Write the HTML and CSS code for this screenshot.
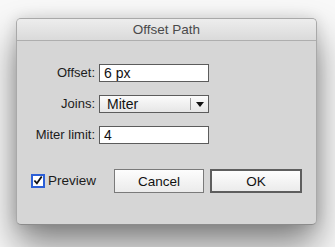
FILE: index.html
```html
<!DOCTYPE html>
<html lang="en">
<head>
    <meta charset="UTF-8">
    <title>Offset Path</title>
    <link rel="stylesheet" href="styles.css">
</head>
<body>
    <div class="dialog">
        <div class="titlebar">Offset Path</div>
        <div class="fields">
            <label class="field-label" for="offset">Offset:</label>
            <div class="text-input" id="offset">6 px</div>

            <label class="field-label">Joins:</label>
            <div class="select">
                <span class="select-value">Miter</span>
                <span class="select-arrow">
                    <svg width="8" height="5" viewBox="0 0 8 5"><path d="M0 0 H8 L4 5 Z" fill="#111"/></svg>
                </span>
            </div>

            <label class="field-label">Miter limit:</label>
            <div class="text-input">4</div>
        </div>
        <div class="footer">
            <label class="check">
                <span class="check-box">
                    <svg width="11" height="11" viewBox="0 0 11 11"><path d="M1.5 5.5 L4.3 8.6 L9.6 1.2" fill="none" stroke="#111" stroke-width="2"/></svg>
                </span>
                Preview
            </label>
            <button class="btn">Cancel</button>
            <button class="btn btn-default">OK</button>
        </div>
    </div>
</body>
</html>
```

FILE: styles.css
```css
html, body {
    height: 100%;
}
body {
    margin: 0;
    padding-top: 18px;
    box-sizing: border-box;
    background-color: #f8f8f8;
    font-family: 'Liberation Sans', Arial, sans-serif;
    font-size: 13px;
    color: #1c1c1c;
}
.dialog {
    box-sizing: border-box;
    width: 301px;
    margin-left: 16px;
    background-color: #d6d6d6;
    border: 1px solid #a9a9a9;
    border-bottom-color: #8c8c8c;
    border-radius: 5px;
    box-shadow: 0 20px 36px rgba(0,0,0,0.48), 0 0 14px rgba(0,0,0,0.12);
}
.titlebar {
    height: 21px;
    line-height: 21px;
    text-align: center;
    font-size: 13.5px;
    color: #4a4a4a;
    background: linear-gradient(#ededed, #dadada);
    border-bottom: 1px solid #aeaeae;
    border-radius: 4px 4px 0 0;
}
.fields {
    display: grid;
    grid-template-columns: 78px 110px;
    grid-auto-rows: 18px;
    column-gap: 4px;
    row-gap: 13px;
    padding-top: 23px;
}
.field-label {
    text-align: right;
    line-height: 18px;
}
.text-input {
    box-sizing: border-box;
    background-color: #fff;
    border: 1px solid #5c5c5c;
    padding-left: 4px;
    line-height: 16px;
    font-size: 14px;
    color: #111;
}
.select {
    box-sizing: border-box;
    display: flex;
    border: 1px solid #5c5c5c;
    background: linear-gradient(#fbfbfb, #e6e6e6);
    line-height: 16px;
    font-size: 14px;
    color: #111;
}
.select-value {
    flex: 1;
    padding-left: 7px;
    border-right: 1px solid #9a9a9a;
    margin: 2px 0;
    line-height: 12px;
}
.select-arrow {
    width: 17px;
    display: flex;
    align-items: center;
    justify-content: center;
}
.footer {
    display: flex;
    align-items: center;
    gap: 6px;
    margin-top: 25px;
    padding: 0 14px 31px 14px;
}
.check {
    display: flex;
    align-items: center;
    gap: 3px;
    margin-right: auto;
    font-size: 13.5px;
    margin-top: -1px;
}
.check-box {
    box-sizing: border-box;
    width: 14px;
    height: 14px;
    border: 2px solid #2c5fd6;
    background-color: #fff;
    display: flex;
    align-items: center;
    justify-content: center;
}
.check-box svg {
    margin-top: -1px;
}
.btn {
    box-sizing: border-box;
    height: 24px;
    width: 90px;
    font-family: inherit;
    font-size: 13.5px;
    color: #111;
    background: linear-gradient(#fdfdfd, #ebebeb);
    border: 1px solid #7a7a7a;
    border-radius: 0;
    padding: 0;
}
.btn-default {
    width: 92px;
    border: 2px solid #5e5e5e;
}
```
